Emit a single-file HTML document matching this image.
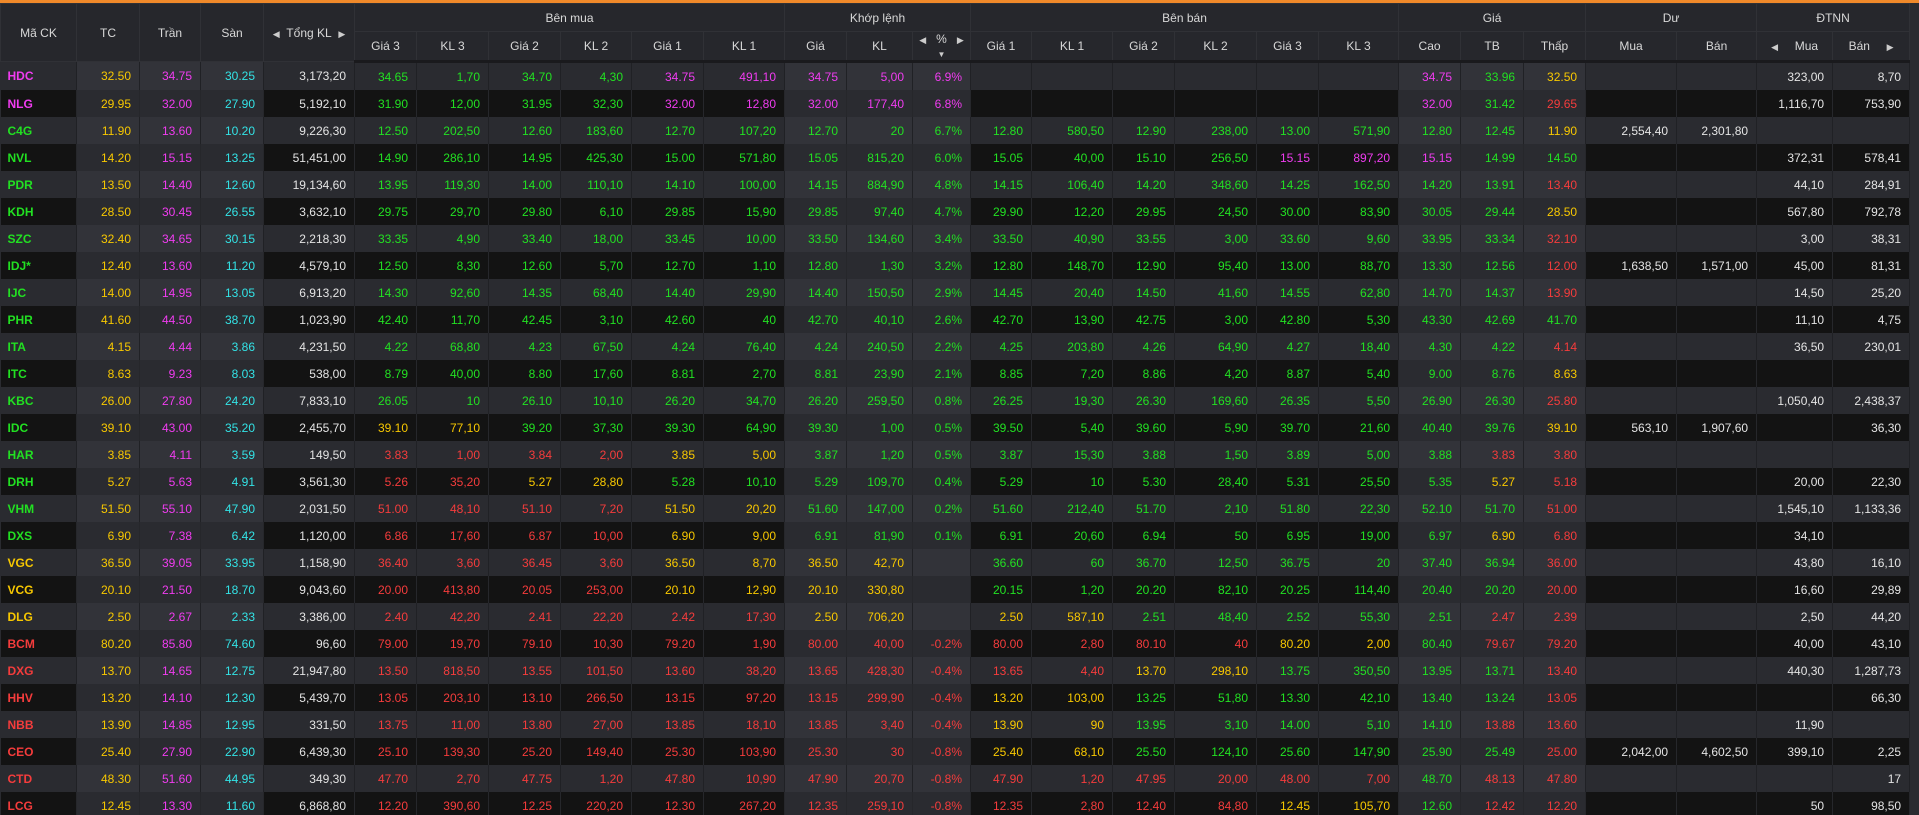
<!DOCTYPE html>
<html><head><meta charset="utf-8"><style>
html,body{margin:0;padding:0;background:#2a2b30;width:1919px;height:815px;overflow:hidden}
.top{height:3px;background:#f0892a}
table{border-collapse:collapse;table-layout:fixed;width:1909px;font-family:"Liberation Sans",Arial,sans-serif;font-size:12px}
th{background:#26272c;color:#d8d8d8;font-weight:normal;border:1px solid #303136;text-align:center;padding:0;white-space:nowrap}
thead tr.r1 th{height:27px}
thead tr.r2 th{height:28px;border-bottom:3px solid #1a1a1d}
td{height:27px;padding:0 8px 0 0;text-align:right;color:#e4e4e4;border-right:1px solid #26272b;white-space:nowrap;overflow:hidden}
tbody tr:nth-child(odd) td{background:#2a2b30;border-right-color:#202125}
tbody tr:nth-child(even) td{background:#131313}
tbody tr:nth-child(odd) td:nth-child(2),tbody tr:nth-child(odd) td:nth-child(3),tbody tr:nth-child(odd) td:nth-child(4),tbody tr:nth-child(odd) td:nth-child(12),tbody tr:nth-child(odd) td:nth-child(13),tbody tr:nth-child(odd) td:nth-child(14),tbody tr:nth-child(odd) td:nth-child(21),tbody tr:nth-child(odd) td:nth-child(22),tbody tr:nth-child(odd) td:nth-child(23){background:#323339}
tbody tr:nth-child(even) td:nth-child(2),tbody tr:nth-child(even) td:nth-child(3),tbody tr:nth-child(even) td:nth-child(4),tbody tr:nth-child(even) td:nth-child(12),tbody tr:nth-child(even) td:nth-child(13),tbody tr:nth-child(even) td:nth-child(14),tbody tr:nth-child(even) td:nth-child(21),tbody tr:nth-child(even) td:nth-child(22),tbody tr:nth-child(even) td:nth-child(23){background:#2a2b30}
td.s{text-align:left;padding-left:7px;font-weight:bold}
.g{color:#22e022}.y{color:#f8c800}.r{color:#f53c3c}.m{color:#f03cf0}.c{color:#33e3e6}
.ar{font-size:9px;color:#ccc}
</style></head><body>
<div class="top"></div>
<table>
<colgroup><col style="width:76px"><col style="width:63px"><col style="width:61px"><col style="width:63px"><col style="width:91px"><col style="width:62px"><col style="width:72px"><col style="width:72px"><col style="width:71px"><col style="width:72px"><col style="width:81px"><col style="width:62px"><col style="width:66px"><col style="width:58px"><col style="width:61px"><col style="width:81px"><col style="width:62px"><col style="width:82px"><col style="width:62px"><col style="width:80px"><col style="width:62px"><col style="width:63px"><col style="width:62px"><col style="width:91px"><col style="width:80px"><col style="width:76px"><col style="width:77px"></colgroup>
<thead>
<tr class="r1"><th rowspan="2">Mã CK</th><th rowspan="2">TC</th><th rowspan="2">Trần</th><th rowspan="2">Sàn</th><th rowspan="2"><span class="ar">◀</span>&nbsp;&nbsp;Tổng KL&nbsp;&nbsp;<span class="ar">▶</span></th><th colspan="6">Bên mua</th><th colspan="3">Khớp lệnh</th><th colspan="6">Bên bán</th><th colspan="3">Giá</th><th colspan="2">Dư</th><th colspan="2">ĐTNN</th></tr>
<tr class="r2"><th>Giá 3</th><th>KL 3</th><th>Giá 2</th><th>KL 2</th><th>Giá 1</th><th>KL 1</th><th>Giá</th><th>KL</th><th><span class="ar">◀</span>&nbsp;&nbsp;&nbsp;%&nbsp;&nbsp;&nbsp;<span class="ar">▶</span><br><span class="ar" style="font-size:8px;line-height:6px">▼</span></th><th>Giá 1</th><th>KL 1</th><th>Giá 2</th><th>KL 2</th><th>Giá 3</th><th>KL 3</th><th>Cao</th><th>TB</th><th>Thấp</th><th>Mua</th><th>Bán</th><th><span class="ar">◀</span>&nbsp;&nbsp;&nbsp;&nbsp;&nbsp;Mua</th><th>Bán&nbsp;&nbsp;&nbsp;&nbsp;&nbsp;<span class="ar">▶</span></th></tr>
</thead>
<tbody>
<tr><td class="s m">HDC</td><td class="y">32.50</td><td class="m">34.75</td><td class="c">30.25</td><td>3,173,20</td><td class="g">34.65</td><td class="g">1,70</td><td class="g">34.70</td><td class="g">4,30</td><td class="m">34.75</td><td class="m">491,10</td><td class="m">34.75</td><td class="m">5,00</td><td class="m">6.9%</td><td></td><td></td><td></td><td></td><td></td><td></td><td class="m">34.75</td><td class="g">33.96</td><td class="y">32.50</td><td></td><td></td><td>323,00</td><td>8,70</td></tr>
<tr><td class="s m">NLG</td><td class="y">29.95</td><td class="m">32.00</td><td class="c">27.90</td><td>5,192,10</td><td class="g">31.90</td><td class="g">12,00</td><td class="g">31.95</td><td class="g">32,30</td><td class="m">32.00</td><td class="m">12,80</td><td class="m">32.00</td><td class="m">177,40</td><td class="m">6.8%</td><td></td><td></td><td></td><td></td><td></td><td></td><td class="m">32.00</td><td class="g">31.42</td><td class="r">29.65</td><td></td><td></td><td>1,116,70</td><td>753,90</td></tr>
<tr><td class="s g">C4G</td><td class="y">11.90</td><td class="m">13.60</td><td class="c">10.20</td><td>9,226,30</td><td class="g">12.50</td><td class="g">202,50</td><td class="g">12.60</td><td class="g">183,60</td><td class="g">12.70</td><td class="g">107,20</td><td class="g">12.70</td><td class="g">20</td><td class="g">6.7%</td><td class="g">12.80</td><td class="g">580,50</td><td class="g">12.90</td><td class="g">238,00</td><td class="g">13.00</td><td class="g">571,90</td><td class="g">12.80</td><td class="g">12.45</td><td class="y">11.90</td><td>2,554,40</td><td>2,301,80</td><td></td><td></td></tr>
<tr><td class="s g">NVL</td><td class="y">14.20</td><td class="m">15.15</td><td class="c">13.25</td><td>51,451,00</td><td class="g">14.90</td><td class="g">286,10</td><td class="g">14.95</td><td class="g">425,30</td><td class="g">15.00</td><td class="g">571,80</td><td class="g">15.05</td><td class="g">815,20</td><td class="g">6.0%</td><td class="g">15.05</td><td class="g">40,00</td><td class="g">15.10</td><td class="g">256,50</td><td class="m">15.15</td><td class="m">897,20</td><td class="m">15.15</td><td class="g">14.99</td><td class="g">14.50</td><td></td><td></td><td>372,31</td><td>578,41</td></tr>
<tr><td class="s g">PDR</td><td class="y">13.50</td><td class="m">14.40</td><td class="c">12.60</td><td>19,134,60</td><td class="g">13.95</td><td class="g">119,30</td><td class="g">14.00</td><td class="g">110,10</td><td class="g">14.10</td><td class="g">100,00</td><td class="g">14.15</td><td class="g">884,90</td><td class="g">4.8%</td><td class="g">14.15</td><td class="g">106,40</td><td class="g">14.20</td><td class="g">348,60</td><td class="g">14.25</td><td class="g">162,50</td><td class="g">14.20</td><td class="g">13.91</td><td class="r">13.40</td><td></td><td></td><td>44,10</td><td>284,91</td></tr>
<tr><td class="s g">KDH</td><td class="y">28.50</td><td class="m">30.45</td><td class="c">26.55</td><td>3,632,10</td><td class="g">29.75</td><td class="g">29,70</td><td class="g">29.80</td><td class="g">6,10</td><td class="g">29.85</td><td class="g">15,90</td><td class="g">29.85</td><td class="g">97,40</td><td class="g">4.7%</td><td class="g">29.90</td><td class="g">12,20</td><td class="g">29.95</td><td class="g">24,50</td><td class="g">30.00</td><td class="g">83,90</td><td class="g">30.05</td><td class="g">29.44</td><td class="y">28.50</td><td></td><td></td><td>567,80</td><td>792,78</td></tr>
<tr><td class="s g">SZC</td><td class="y">32.40</td><td class="m">34.65</td><td class="c">30.15</td><td>2,218,30</td><td class="g">33.35</td><td class="g">4,90</td><td class="g">33.40</td><td class="g">18,00</td><td class="g">33.45</td><td class="g">10,00</td><td class="g">33.50</td><td class="g">134,60</td><td class="g">3.4%</td><td class="g">33.50</td><td class="g">40,90</td><td class="g">33.55</td><td class="g">3,00</td><td class="g">33.60</td><td class="g">9,60</td><td class="g">33.95</td><td class="g">33.34</td><td class="r">32.10</td><td></td><td></td><td>3,00</td><td>38,31</td></tr>
<tr><td class="s g">IDJ*</td><td class="y">12.40</td><td class="m">13.60</td><td class="c">11.20</td><td>4,579,10</td><td class="g">12.50</td><td class="g">8,30</td><td class="g">12.60</td><td class="g">5,70</td><td class="g">12.70</td><td class="g">1,10</td><td class="g">12.80</td><td class="g">1,30</td><td class="g">3.2%</td><td class="g">12.80</td><td class="g">148,70</td><td class="g">12.90</td><td class="g">95,40</td><td class="g">13.00</td><td class="g">88,70</td><td class="g">13.30</td><td class="g">12.56</td><td class="r">12.00</td><td>1,638,50</td><td>1,571,00</td><td>45,00</td><td>81,31</td></tr>
<tr><td class="s g">IJC</td><td class="y">14.00</td><td class="m">14.95</td><td class="c">13.05</td><td>6,913,20</td><td class="g">14.30</td><td class="g">92,60</td><td class="g">14.35</td><td class="g">68,40</td><td class="g">14.40</td><td class="g">29,90</td><td class="g">14.40</td><td class="g">150,50</td><td class="g">2.9%</td><td class="g">14.45</td><td class="g">20,40</td><td class="g">14.50</td><td class="g">41,60</td><td class="g">14.55</td><td class="g">62,80</td><td class="g">14.70</td><td class="g">14.37</td><td class="r">13.90</td><td></td><td></td><td>14,50</td><td>25,20</td></tr>
<tr><td class="s g">PHR</td><td class="y">41.60</td><td class="m">44.50</td><td class="c">38.70</td><td>1,023,90</td><td class="g">42.40</td><td class="g">11,70</td><td class="g">42.45</td><td class="g">3,10</td><td class="g">42.60</td><td class="g">40</td><td class="g">42.70</td><td class="g">40,10</td><td class="g">2.6%</td><td class="g">42.70</td><td class="g">13,90</td><td class="g">42.75</td><td class="g">3,00</td><td class="g">42.80</td><td class="g">5,30</td><td class="g">43.30</td><td class="g">42.69</td><td class="g">41.70</td><td></td><td></td><td>11,10</td><td>4,75</td></tr>
<tr><td class="s g">ITA</td><td class="y">4.15</td><td class="m">4.44</td><td class="c">3.86</td><td>4,231,50</td><td class="g">4.22</td><td class="g">68,80</td><td class="g">4.23</td><td class="g">67,50</td><td class="g">4.24</td><td class="g">76,40</td><td class="g">4.24</td><td class="g">240,50</td><td class="g">2.2%</td><td class="g">4.25</td><td class="g">203,80</td><td class="g">4.26</td><td class="g">64,90</td><td class="g">4.27</td><td class="g">18,40</td><td class="g">4.30</td><td class="g">4.22</td><td class="r">4.14</td><td></td><td></td><td>36,50</td><td>230,01</td></tr>
<tr><td class="s g">ITC</td><td class="y">8.63</td><td class="m">9.23</td><td class="c">8.03</td><td>538,00</td><td class="g">8.79</td><td class="g">40,00</td><td class="g">8.80</td><td class="g">17,60</td><td class="g">8.81</td><td class="g">2,70</td><td class="g">8.81</td><td class="g">23,90</td><td class="g">2.1%</td><td class="g">8.85</td><td class="g">7,20</td><td class="g">8.86</td><td class="g">4,20</td><td class="g">8.87</td><td class="g">5,40</td><td class="g">9.00</td><td class="g">8.76</td><td class="y">8.63</td><td></td><td></td><td></td><td></td></tr>
<tr><td class="s g">KBC</td><td class="y">26.00</td><td class="m">27.80</td><td class="c">24.20</td><td>7,833,10</td><td class="g">26.05</td><td class="g">10</td><td class="g">26.10</td><td class="g">10,10</td><td class="g">26.20</td><td class="g">34,70</td><td class="g">26.20</td><td class="g">259,50</td><td class="g">0.8%</td><td class="g">26.25</td><td class="g">19,30</td><td class="g">26.30</td><td class="g">169,60</td><td class="g">26.35</td><td class="g">5,50</td><td class="g">26.90</td><td class="g">26.30</td><td class="r">25.80</td><td></td><td></td><td>1,050,40</td><td>2,438,37</td></tr>
<tr><td class="s g">IDC</td><td class="y">39.10</td><td class="m">43.00</td><td class="c">35.20</td><td>2,455,70</td><td class="y">39.10</td><td class="y">77,10</td><td class="g">39.20</td><td class="g">37,30</td><td class="g">39.30</td><td class="g">64,90</td><td class="g">39.30</td><td class="g">1,00</td><td class="g">0.5%</td><td class="g">39.50</td><td class="g">5,40</td><td class="g">39.60</td><td class="g">5,90</td><td class="g">39.70</td><td class="g">21,60</td><td class="g">40.40</td><td class="g">39.76</td><td class="y">39.10</td><td>563,10</td><td>1,907,60</td><td></td><td>36,30</td></tr>
<tr><td class="s g">HAR</td><td class="y">3.85</td><td class="m">4.11</td><td class="c">3.59</td><td>149,50</td><td class="r">3.83</td><td class="r">1,00</td><td class="r">3.84</td><td class="r">2,00</td><td class="y">3.85</td><td class="y">5,00</td><td class="g">3.87</td><td class="g">1,20</td><td class="g">0.5%</td><td class="g">3.87</td><td class="g">15,30</td><td class="g">3.88</td><td class="g">1,50</td><td class="g">3.89</td><td class="g">5,00</td><td class="g">3.88</td><td class="r">3.83</td><td class="r">3.80</td><td></td><td></td><td></td><td></td></tr>
<tr><td class="s g">DRH</td><td class="y">5.27</td><td class="m">5.63</td><td class="c">4.91</td><td>3,561,30</td><td class="r">5.26</td><td class="r">35,20</td><td class="y">5.27</td><td class="y">28,80</td><td class="g">5.28</td><td class="g">10,10</td><td class="g">5.29</td><td class="g">109,70</td><td class="g">0.4%</td><td class="g">5.29</td><td class="g">10</td><td class="g">5.30</td><td class="g">28,40</td><td class="g">5.31</td><td class="g">25,50</td><td class="g">5.35</td><td class="y">5.27</td><td class="r">5.18</td><td></td><td></td><td>20,00</td><td>22,30</td></tr>
<tr><td class="s g">VHM</td><td class="y">51.50</td><td class="m">55.10</td><td class="c">47.90</td><td>2,031,50</td><td class="r">51.00</td><td class="r">48,10</td><td class="r">51.10</td><td class="r">7,20</td><td class="y">51.50</td><td class="y">20,20</td><td class="g">51.60</td><td class="g">147,00</td><td class="g">0.2%</td><td class="g">51.60</td><td class="g">212,40</td><td class="g">51.70</td><td class="g">2,10</td><td class="g">51.80</td><td class="g">22,30</td><td class="g">52.10</td><td class="g">51.70</td><td class="r">51.00</td><td></td><td></td><td>1,545,10</td><td>1,133,36</td></tr>
<tr><td class="s g">DXS</td><td class="y">6.90</td><td class="m">7.38</td><td class="c">6.42</td><td>1,120,00</td><td class="r">6.86</td><td class="r">17,60</td><td class="r">6.87</td><td class="r">10,00</td><td class="y">6.90</td><td class="y">9,00</td><td class="g">6.91</td><td class="g">81,90</td><td class="g">0.1%</td><td class="g">6.91</td><td class="g">20,60</td><td class="g">6.94</td><td class="g">50</td><td class="g">6.95</td><td class="g">19,00</td><td class="g">6.97</td><td class="y">6.90</td><td class="r">6.80</td><td></td><td></td><td>34,10</td><td></td></tr>
<tr><td class="s y">VGC</td><td class="y">36.50</td><td class="m">39.05</td><td class="c">33.95</td><td>1,158,90</td><td class="r">36.40</td><td class="r">3,60</td><td class="r">36.45</td><td class="r">3,60</td><td class="y">36.50</td><td class="y">8,70</td><td class="y">36.50</td><td class="y">42,70</td><td></td><td class="g">36.60</td><td class="g">60</td><td class="g">36.70</td><td class="g">12,50</td><td class="g">36.75</td><td class="g">20</td><td class="g">37.40</td><td class="g">36.94</td><td class="r">36.00</td><td></td><td></td><td>43,80</td><td>16,10</td></tr>
<tr><td class="s y">VCG</td><td class="y">20.10</td><td class="m">21.50</td><td class="c">18.70</td><td>9,043,60</td><td class="r">20.00</td><td class="r">413,80</td><td class="r">20.05</td><td class="r">253,00</td><td class="y">20.10</td><td class="y">12,90</td><td class="y">20.10</td><td class="y">330,80</td><td></td><td class="g">20.15</td><td class="g">1,20</td><td class="g">20.20</td><td class="g">82,10</td><td class="g">20.25</td><td class="g">114,40</td><td class="g">20.40</td><td class="g">20.20</td><td class="r">20.00</td><td></td><td></td><td>16,60</td><td>29,89</td></tr>
<tr><td class="s y">DLG</td><td class="y">2.50</td><td class="m">2.67</td><td class="c">2.33</td><td>3,386,00</td><td class="r">2.40</td><td class="r">42,20</td><td class="r">2.41</td><td class="r">22,20</td><td class="r">2.42</td><td class="r">17,30</td><td class="y">2.50</td><td class="y">706,20</td><td></td><td class="y">2.50</td><td class="y">587,10</td><td class="g">2.51</td><td class="g">48,40</td><td class="g">2.52</td><td class="g">55,30</td><td class="g">2.51</td><td class="r">2.47</td><td class="r">2.39</td><td></td><td></td><td>2,50</td><td>44,20</td></tr>
<tr><td class="s r">BCM</td><td class="y">80.20</td><td class="m">85.80</td><td class="c">74.60</td><td>96,60</td><td class="r">79.00</td><td class="r">19,70</td><td class="r">79.10</td><td class="r">10,30</td><td class="r">79.20</td><td class="r">1,90</td><td class="r">80.00</td><td class="r">40,00</td><td class="r">-0.2%</td><td class="r">80.00</td><td class="r">2,80</td><td class="r">80.10</td><td class="r">40</td><td class="y">80.20</td><td class="y">2,00</td><td class="g">80.40</td><td class="r">79.67</td><td class="r">79.20</td><td></td><td></td><td>40,00</td><td>43,10</td></tr>
<tr><td class="s r">DXG</td><td class="y">13.70</td><td class="m">14.65</td><td class="c">12.75</td><td>21,947,80</td><td class="r">13.50</td><td class="r">818,50</td><td class="r">13.55</td><td class="r">101,50</td><td class="r">13.60</td><td class="r">38,20</td><td class="r">13.65</td><td class="r">428,30</td><td class="r">-0.4%</td><td class="r">13.65</td><td class="r">4,40</td><td class="y">13.70</td><td class="y">298,10</td><td class="g">13.75</td><td class="g">350,50</td><td class="g">13.95</td><td class="g">13.71</td><td class="r">13.40</td><td></td><td></td><td>440,30</td><td>1,287,73</td></tr>
<tr><td class="s r">HHV</td><td class="y">13.20</td><td class="m">14.10</td><td class="c">12.30</td><td>5,439,70</td><td class="r">13.05</td><td class="r">203,10</td><td class="r">13.10</td><td class="r">266,50</td><td class="r">13.15</td><td class="r">97,20</td><td class="r">13.15</td><td class="r">299,90</td><td class="r">-0.4%</td><td class="y">13.20</td><td class="y">103,00</td><td class="g">13.25</td><td class="g">51,80</td><td class="g">13.30</td><td class="g">42,10</td><td class="g">13.40</td><td class="g">13.24</td><td class="r">13.05</td><td></td><td></td><td></td><td>66,30</td></tr>
<tr><td class="s r">NBB</td><td class="y">13.90</td><td class="m">14.85</td><td class="c">12.95</td><td>331,50</td><td class="r">13.75</td><td class="r">11,00</td><td class="r">13.80</td><td class="r">27,00</td><td class="r">13.85</td><td class="r">18,10</td><td class="r">13.85</td><td class="r">3,40</td><td class="r">-0.4%</td><td class="y">13.90</td><td class="y">90</td><td class="g">13.95</td><td class="g">3,10</td><td class="g">14.00</td><td class="g">5,10</td><td class="g">14.10</td><td class="r">13.88</td><td class="r">13.60</td><td></td><td></td><td>11,90</td><td></td></tr>
<tr><td class="s r">CEO</td><td class="y">25.40</td><td class="m">27.90</td><td class="c">22.90</td><td>6,439,30</td><td class="r">25.10</td><td class="r">139,30</td><td class="r">25.20</td><td class="r">149,40</td><td class="r">25.30</td><td class="r">103,90</td><td class="r">25.30</td><td class="r">30</td><td class="r">-0.8%</td><td class="y">25.40</td><td class="y">68,10</td><td class="g">25.50</td><td class="g">124,10</td><td class="g">25.60</td><td class="g">147,90</td><td class="g">25.90</td><td class="g">25.49</td><td class="r">25.00</td><td>2,042,00</td><td>4,602,50</td><td>399,10</td><td>2,25</td></tr>
<tr><td class="s r">CTD</td><td class="y">48.30</td><td class="m">51.60</td><td class="c">44.95</td><td>349,30</td><td class="r">47.70</td><td class="r">2,70</td><td class="r">47.75</td><td class="r">1,20</td><td class="r">47.80</td><td class="r">10,90</td><td class="r">47.90</td><td class="r">20,70</td><td class="r">-0.8%</td><td class="r">47.90</td><td class="r">1,20</td><td class="r">47.95</td><td class="r">20,00</td><td class="r">48.00</td><td class="r">7,00</td><td class="g">48.70</td><td class="r">48.13</td><td class="r">47.80</td><td></td><td></td><td></td><td>17</td></tr>
<tr><td class="s r">LCG</td><td class="y">12.45</td><td class="m">13.30</td><td class="c">11.60</td><td>6,868,80</td><td class="r">12.20</td><td class="r">390,60</td><td class="r">12.25</td><td class="r">220,20</td><td class="r">12.30</td><td class="r">267,20</td><td class="r">12.35</td><td class="r">259,10</td><td class="r">-0.8%</td><td class="r">12.35</td><td class="r">2,80</td><td class="r">12.40</td><td class="r">84,80</td><td class="y">12.45</td><td class="y">105,70</td><td class="g">12.60</td><td class="r">12.42</td><td class="r">12.20</td><td></td><td></td><td>50</td><td>98,50</td></tr>
</tbody>
</table>
</body></html>
